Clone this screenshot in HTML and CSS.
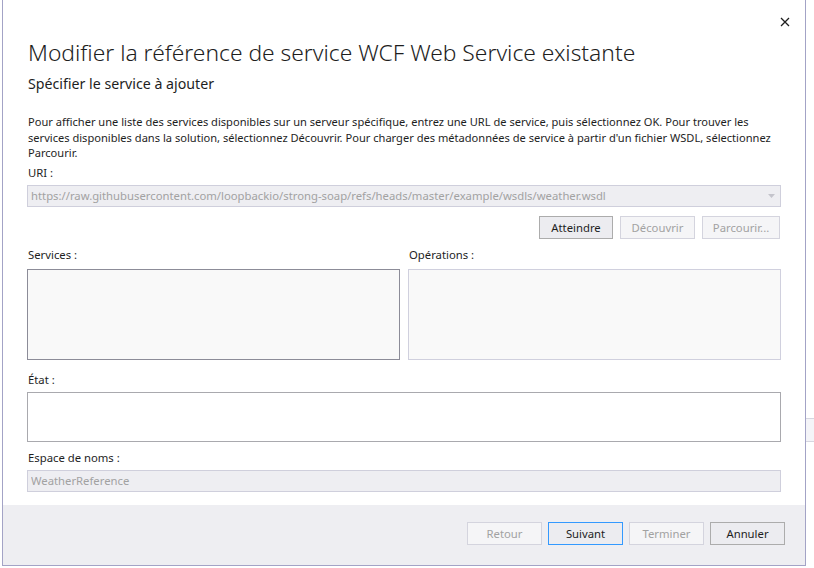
FILE: index.html
```html
<!DOCTYPE html>
<html lang="fr">
<head>
<meta charset="utf-8">
<link rel="stylesheet" href="styles.css">
</head>
<body>
<div class="desk">
  <div class="dialog">
    <div class="main">
      <button class="close" aria-label="Fermer">
        <svg width="10" height="10" viewBox="0 0 10 10"><path d="M1 1 L9 9 M9 1 L1 9" stroke="#1e1e1e" stroke-width="1.3" fill="none"/></svg>
      </button>
      <h1 class="title">Modifier la référence de service WCF Web Service existante</h1>
      <h2 class="subtitle">Spécifier le service à ajouter</h2>
      <p class="intro">Pour afficher une liste des services disponibles sur un serveur spécifique, entrez une URL de service, puis sélectionnez OK. Pour trouver les services disponibles dans la solution, sélectionnez Découvrir. Pour charger des métadonnées de service à partir d'un fichier WSDL, sélectionnez Parcourir.</p>
      <div class="label uri-label">URI :</div>
      <div class="field combo">
        <span class="field-text">https://raw.githubusercontent.com/loopbackio/strong-soap/refs/heads/master/example/wsdls/weather.wsdl</span>
        <svg class="arrow" width="7" height="4" viewBox="0 0 7 4"><path d="M0 0 H7 L3.5 4 Z" fill="#c4c4cc"/></svg>
      </div>
      <div class="actions">
        <button class="btn b-go">Atteindre</button>
        <button class="btn disabled b-disc">Découvrir</button>
        <button class="btn disabled b-browse">Parcourir...</button>
      </div>
      <div class="lists">
        <div class="col">
          <div class="label">Services :</div>
          <div class="list services"></div>
        </div>
        <div class="col">
          <div class="label">Opérations :</div>
          <div class="list ops"></div>
        </div>
      </div>
      <div class="label state-label">État :</div>
      <div class="state"></div>
      <div class="label ns-label">Espace de noms :</div>
      <div class="field"><span class="field-text">WeatherReference</span></div>
    </div>
    <div class="footer">
      <button class="btn fbtn disabled">Retour</button>
      <button class="btn fbtn primary">Suivant</button>
      <button class="btn fbtn disabled">Terminer</button>
      <button class="btn fbtn">Annuler</button>
    </div>
  </div>
  <div class="side">
    <div class="side-band"></div>
  </div>
</div>
</body>
</html>
```

FILE: styles.css
```css
* { box-sizing: border-box; }
html, body { margin: 0; padding: 0; background: #ffffff; }
body {
  width: 814px;
  height: 568px;
  overflow: hidden;
  font-family: "Segoe UI", "Noto Sans", "Open Sans", sans-serif;
  color: #1e1e1e;
}
.desk {
  display: flex;
  height: 568px;
  padding-left: 2px;
}
.dialog {
  width: 804px;
  height: 566px;
  border: 1px solid #a3a3c6;
  border-top: none;
  background: #ffffff;
  display: flex;
  flex-direction: column;
}
.side {
  flex: 1;
  padding-top: 418px;
}
.side-band {
  height: 24px;
  border-top: 1px solid #d6d6e0;
  border-bottom: 1px solid #d6d6e0;
  background: #f4f4f8;
}
.main {
  flex: 1;
  position: relative;
  padding: 38px 24px 0 24px;
}
.close {
  position: absolute;
  top: 15px;
  right: 12px;
  width: 16px;
  height: 14px;
  border: none;
  background: transparent;
  padding: 0;
  display: flex;
  align-items: center;
  justify-content: center;
}
.title {
  margin: 0 0 0 1px;
  font-weight: 300;
  font-size: 22.8px;
  line-height: 30px;
  color: #1e1e1e;
}
.subtitle {
  margin: 6px 0 0 1px;
  font-weight: 400;
  font-size: 14.2px;
  line-height: 20px;
  color: #1e1e1e;
}
.intro {
  margin: 20px 0 0 1px;
  font-size: 11.1px;
  line-height: 15.5px;
}
.label {
  font-size: 11.3px;
  line-height: 16px;
  margin-left: 1px;
}
.uri-label { margin-top: 4px; }
.field {
  height: 22px;
  border: 1px solid #cfcfdc;
  background: #eeeef2;
  display: flex;
  align-items: center;
  padding: 0 3px;
  font-size: 11.3px;
  color: #a2a2a2;
  margin-top: 4px;
}
.field-text { flex: 1; white-space: nowrap; overflow: hidden; }
.combo .arrow { margin-right: 2px; }
.actions {
  display: flex;
  justify-content: flex-end;
  gap: 7px;
  margin-top: 9px;
  padding-right: 1px;
}
.btn {
  height: 23px;
  width: 75px;
  border: 1px solid #acacac;
  background: #ececf0;
  font-family: inherit;
  font-size: 11.3px;
  color: #1e1e1e;
  padding: 0;
}
.btn.disabled {
  border-color: #d4d4de;
  background: #f5f5f7;
  color: #a2a2a2;
}
.btn.primary { border-color: #3399ff; }
.b-go { width: 74px; }
.b-disc { width: 75px; }
.b-browse { width: 78px; }
.lists {
  display: flex;
  gap: 8px;
  margin-top: 8px;
}
.col { flex: 1; }
.list {
  height: 91px;
  margin-top: 6px;
  background: #f9f9f9;
}
.services { border: 1px solid #8c8c98; }
.ops { border: 1px solid #d0d0de; }
.state-label { margin-top: 12px; }
.state {
  height: 50px;
  margin-top: 4px;
  border: 1px solid #a9a9ae;
  background: #ffffff;
}
.ns-label { margin-top: 8px; }
.footer {
  height: 60px;
  background: #eeeef2;
  display: flex;
  justify-content: flex-end;
  align-items: flex-start;
  gap: 6px;
  padding: 17px 20px 0 0;
}
.fbtn { width: 75px; height: 23px; }
```
